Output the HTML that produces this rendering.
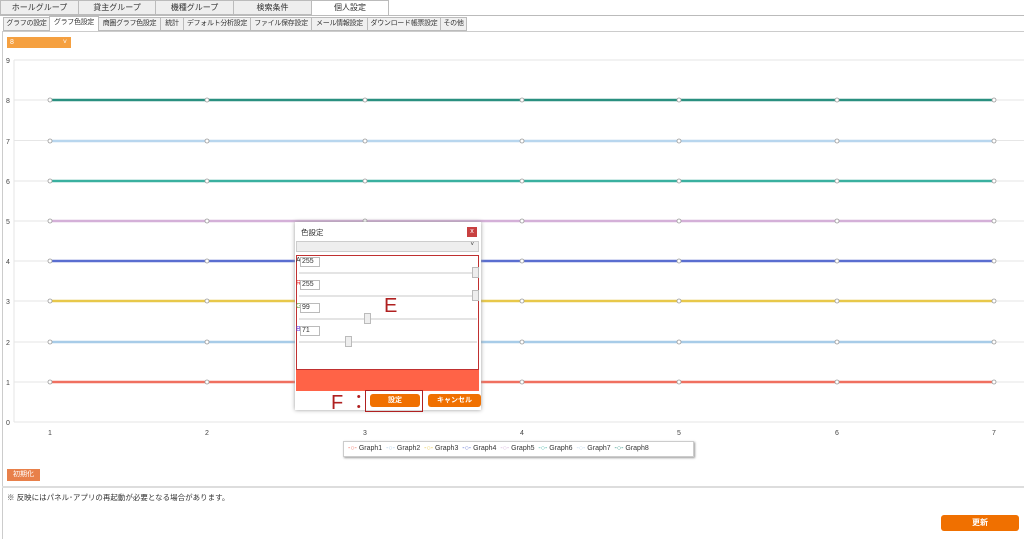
<!DOCTYPE html>
<html><head><meta charset="utf-8"><style>
*{margin:0;padding:0;box-sizing:border-box}
body{width:1024px;height:539px;background:#fff;font-family:"Liberation Sans","Noto Sans CJK JP",sans-serif;font-size:8px;color:#333;position:relative;overflow:hidden}
.a{position:absolute}
.t1{top:0;height:15px;border:1px solid #bbb;background:#eee;text-align:center;line-height:13px;font-size:8px;white-space:nowrap}
.t2{top:17px;height:14px;border:1px solid #bbb;background:#f0f0f0;text-align:center;line-height:12px;font-size:7px;white-space:nowrap;overflow:hidden;letter-spacing:-0.3px}
</style></head><body>
<div class="a t1" style="left:0;width:79px">ホールグループ</div>
<div class="a t1" style="left:78px;width:78px">貸主グループ</div>
<div class="a t1" style="left:155px;width:79px">機種グループ</div>
<div class="a t1" style="left:233px;width:79px">検索条件</div>
<div class="a t1" style="left:311px;width:78px;background:#fff;height:16px">個人設定</div>
<div class="a" style="left:0;top:15px;width:1024px;height:1px;background:#bbb"></div>
<div class="a t2" style="left:3px;width:47px">グラフの設定</div>
<div class="a t2" style="left:49px;width:50px;background:#fff;top:16px;height:16px">グラフ色設定</div>
<div class="a t2" style="left:98px;width:63px">商圏グラフ色設定</div>
<div class="a t2" style="left:160px;width:24px">統計</div>
<div class="a t2" style="left:183px;width:68px">デフォルト分析設定</div>
<div class="a t2" style="left:250px;width:62px">ファイル保存設定</div>
<div class="a t2" style="left:311px;width:57px">メール情報設定</div>
<div class="a t2" style="left:367px;width:74px">ダウンロード帳票設定</div>
<div class="a t2" style="left:440px;width:27px">その他</div>
<div class="a" style="left:2px;top:31px;width:1022px;height:1px;background:#ccc"></div>
<div class="a" style="left:2px;top:31px;width:1px;height:508px;background:#ccc"></div>
<div class="a" style="left:7px;top:37px;width:64px;height:11px;background:#f5a040;color:#fff;font-size:7px;line-height:11px;padding-left:3px">8<span style="position:absolute;right:4px">˅</span></div>
<svg class="a" style="left:0;top:50px" width="1024" height="410">
<g stroke="#e6e6e6" stroke-width="1">
<line x1="14" y1="10" x2="1024" y2="10"/><line x1="14" y1="50" x2="1024" y2="50"/><line x1="14" y1="90.5" x2="1024" y2="90.5"/><line x1="14" y1="131" x2="1024" y2="131"/><line x1="14" y1="171" x2="1024" y2="171"/><line x1="14" y1="211" x2="1024" y2="211"/><line x1="14" y1="251" x2="1024" y2="251"/><line x1="14" y1="292" x2="1024" y2="292"/><line x1="14" y1="332" x2="1024" y2="332"/><line x1="14" y1="372" x2="1024" y2="372"/>
<line x1="14" y1="10" x2="14" y2="372"/>
</g>
<g font-size="7" fill="#444" font-family="Liberation Sans">
<text x="6" y="13">9</text><text x="6" y="53">8</text><text x="6" y="94">7</text><text x="6" y="134">6</text><text x="6" y="174">5</text><text x="6" y="214">4</text><text x="6" y="254">3</text><text x="6" y="295">2</text><text x="6" y="335">1</text><text x="6" y="375">0</text>
<text x="48" y="385">1</text><text x="205" y="385">2</text><text x="363" y="385">3</text><text x="520" y="385">4</text><text x="677" y="385">5</text><text x="835" y="385">6</text><text x="992" y="385">7</text>
</g>
<g stroke-width="2.5" fill="#fff">
<g stroke="#2a9080"><line x1="50" y1="50" x2="994" y2="50"/></g>
<g stroke="#b8d6ee"><line x1="50" y1="91" x2="994" y2="91"/></g>
<g stroke="#3ab0a0"><line x1="50" y1="131" x2="994" y2="131"/></g>
<g stroke="#d4b0d8"><line x1="50" y1="171" x2="994" y2="171"/></g>
<g stroke="#5a6ed0"><line x1="50" y1="211" x2="994" y2="211"/></g>
<g stroke="#e8c84a"><line x1="50" y1="251" x2="994" y2="251"/></g>
<g stroke="#a8cce8"><line x1="50" y1="292" x2="994" y2="292"/></g>
<g stroke="#f07060"><line x1="50" y1="332" x2="994" y2="332"/></g>
</g>
</svg>
<svg class="a" style="left:0;top:50px" width="1024" height="410" id="pts"></svg>
<div class="a" style="left:343px;top:441px;width:351px;height:16px;border:1px solid #ccc;box-shadow:1px 1px 2px #999;background:#fff;font-size:7px;line-height:14px;white-space:nowrap;padding-left:4px">
<span style="color:#f07060">-○-</span> Graph1 &nbsp;<span style="color:#a8cce8">-○-</span> Graph2 &nbsp;<span style="color:#e8c84a">-○-</span> Graph3 &nbsp;<span style="color:#5a6ed0">-○-</span> Graph4 &nbsp;<span style="color:#d4b0d8">-○-</span> Graph5 &nbsp;<span style="color:#3ab0a0">-○-</span> Graph6 &nbsp;<span style="color:#b8d6ee">-○-</span> Graph7 &nbsp;<span style="color:#2a9080">-○-</span> Graph8</div>
<div class="a" style="left:7px;top:469px;width:33px;height:12px;background:#e8804a;color:#fff;font-size:7px;line-height:12px;text-align:center">初期化</div>
<div class="a" style="left:2px;top:486px;width:1022px;height:2px;background:#ddd"></div>
<div class="a" style="left:7px;top:492px;font-size:7.5px">※ 反映にはパネル･アプリの再起動が必要となる場合があります。</div>
<div class="a" style="left:941px;top:515px;width:78px;height:16px;background:#f07000;border-radius:3px;color:#fff;font-size:8px;line-height:16px;text-align:center;font-weight:bold">更新</div>
<div class="a" style="left:295px;top:222px;width:186px;height:188px;background:#fff;box-shadow:0 0 4px #999">
<div class="a" style="left:6px;top:5px;font-size:7.5px">色設定</div>
<div class="a" style="left:172px;top:5px;width:10px;height:10px;background:#c84040;color:#fff;font-size:7px;text-align:center;line-height:10px">x</div>
<div class="a" style="left:1px;top:19px;width:183px;height:11px;background:#eee;border:1px solid #ccc;font-size:6px;text-align:right;padding-right:4px">˅</div>
<div class="a" style="left:1px;top:33px;width:183px;height:115px;border:1px solid #c03030"></div>
<div class="a" style="left:1px;top:35px;font-size:7px">A</div><div class="a" style="left:5px;top:35px;width:20px;height:10px;border:1px solid #bbb;font-size:7px;padding-left:1px;background:#fff">255</div>
<div class="a" style="left:1px;top:58px;font-size:7px;color:#e02020">R</div><div class="a" style="left:5px;top:58px;width:20px;height:10px;border:1px solid #bbb;font-size:7px;padding-left:1px;background:#fff">255</div>
<div class="a" style="left:1px;top:81px;font-size:7px;color:#60a040">G</div><div class="a" style="left:5px;top:81px;width:20px;height:10px;border:1px solid #bbb;font-size:7px;padding-left:1px;background:#fff">99</div>
<div class="a" style="left:1px;top:104px;font-size:7px;color:#6040e0">B</div><div class="a" style="left:5px;top:104px;width:20px;height:10px;border:1px solid #bbb;font-size:7px;padding-left:1px;background:#fff">71</div>
<div class="a" style="left:4px;top:50px;width:178px;height:2px;background:#e4e4e4"></div>
<div class="a" style="left:4px;top:73px;width:178px;height:2px;background:#e4e4e4"></div>
<div class="a" style="left:4px;top:96px;width:178px;height:2px;background:#e4e4e4"></div>
<div class="a" style="left:4px;top:119px;width:178px;height:2px;background:#e4e4e4"></div>
<div class="a" style="left:177px;top:45px;width:7px;height:11px;background:#eee;border:1px solid #bbb"></div>
<div class="a" style="left:177px;top:68px;width:7px;height:11px;background:#eee;border:1px solid #bbb"></div>
<div class="a" style="left:69px;top:91px;width:7px;height:11px;background:#eee;border:1px solid #bbb"></div>
<div class="a" style="left:50px;top:114px;width:7px;height:11px;background:#eee;border:1px solid #bbb"></div>
<div class="a" style="left:89px;top:73px;font-size:20px;color:#b02020">E</div>
<div class="a" style="left:1px;top:148px;width:183px;height:21px;background:#ff6347"></div>
<div class="a" style="left:36px;top:164px;font-size:20px;color:#b02020">F ：</div>
<div class="a" style="left:70px;top:168px;width:58px;height:22px;border:1px solid #b02020"></div>
<div class="a" style="left:75px;top:172px;width:50px;height:13px;background:#f07000;border-radius:3px;color:#fff;font-size:7px;font-weight:bold;text-align:center;line-height:13px">設定</div>
<div class="a" style="left:133px;top:172px;width:53px;height:13px;background:#f07000;border-radius:3px;color:#fff;font-size:7px;font-weight:bold;text-align:center;line-height:13px">キャンセル</div>
</div>
<script>
var s=document.getElementById('pts'),h='';
[50,91,131,171,211,251,292,332].forEach(function(y){[50,207,365,522,679,837,994].forEach(function(x){h+='<circle cx="'+x+'" cy="'+y+'" r="2" fill="#fff" stroke="#999" stroke-width="0.8"/>';});});
s.innerHTML=h;
</script>
</body></html>
